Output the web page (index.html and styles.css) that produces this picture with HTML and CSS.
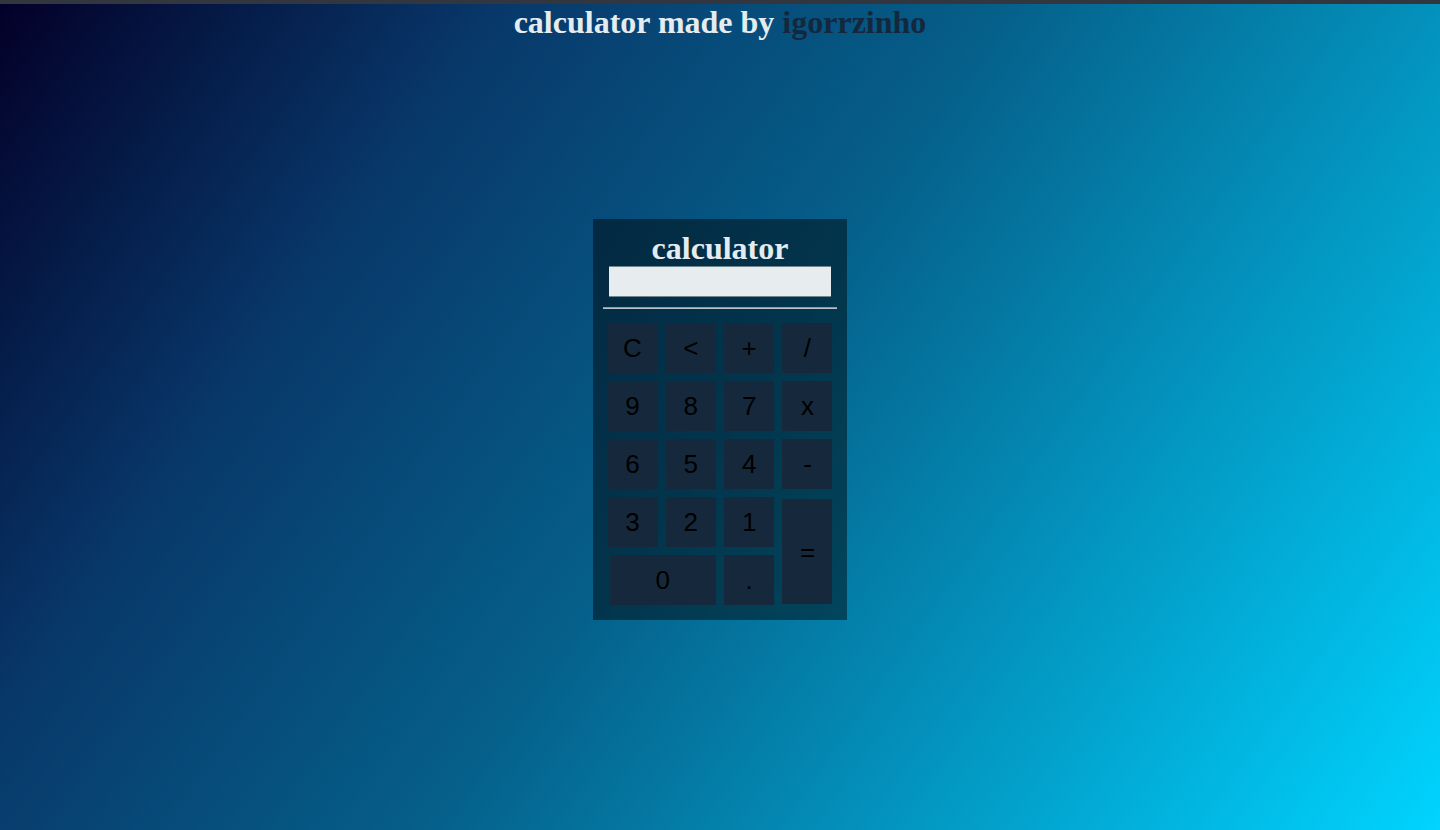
FILE: index.html
```html
<!DOCTYPE html>
<html lang="en">
<head>
<meta charset="utf-8">
<title>calculator</title>
<link rel="stylesheet" href="styles.css">
</head>
<body>
<div class="topbar"></div>
<h1 class="heading">calculator made by <span class="author">igorrzinho</span></h1>
<main class="calc">
  <h2 class="calc-title">calculator</h2>
  <input class="display" type="text">
  <hr class="divider">
  <div class="keys">
    <button class="key">C</button>
    <button class="key">&lt;</button>
    <button class="key">+</button>
    <button class="key">/</button>
    <button class="key">9</button>
    <button class="key">8</button>
    <button class="key">7</button>
    <button class="key">x</button>
    <button class="key">6</button>
    <button class="key">5</button>
    <button class="key">4</button>
    <button class="key">-</button>
    <button class="key">3</button>
    <button class="key">2</button>
    <button class="key">1</button>
    <button class="key key-eq">=</button>
    <button class="key key-zero">0</button>
    <button class="key">.</button>
  </div>
</main>
</body>
</html>
```

FILE: styles.css
```css
html, body {
  margin: 0;
  padding: 0;
  height: 100%;
}
body {
  background: linear-gradient(125deg, #030028 0%, #08386a 25%, #05608a 50%, #00d4ff 100%);
  font-family: "Liberation Serif", serif;
  overflow: hidden;
}
.topbar {
  height: 4px;
  background: #31363f;
}
.heading {
  margin: 0;
  font-size: 32px;
  font-weight: bold;
  text-align: center;
  color: #e5ecef;
  line-height: 37px;
}
.author {
  color: #13283d;
}
.calc {
  width: 254px;
  box-sizing: border-box;
  margin: 178px auto 0;
  padding: 11px 10px 15px;
  background: rgba(0, 0, 0, 0.45);
  display: flex;
  flex-direction: column;
  align-items: center;
}
.calc-title {
  margin: 0;
  font-size: 32px;
  font-weight: bold;
  color: #e5ecef;
  line-height: 36px;
}
.display {
  display: block;
  width: 222px;
  height: 31px;
  box-sizing: border-box;
  margin: 0;
  border: none;
  border-top: 1px solid #71858f;
  border-bottom: 1px solid #71858f;
  background: #e7ecef;
  padding: 0 4px;
}
.divider {
  width: 100%;
  box-sizing: border-box;
  margin: 10px 0 14px;
  border: none;
  border-top: 1px solid #8d9ca4;
  border-bottom: 1px solid #b8c2c7;
  height: 0;
}
.keys {
  display: grid;
  grid-template-columns: repeat(4, 50px);
  grid-auto-rows: 50px;
  column-gap: 8.33px;
  row-gap: 8px;
}
.key {
  border: none;
  margin: 0;
  padding: 0;
  background: #16283b;
  color: #000;
  font-family: "Liberation Sans", Arial, sans-serif;
  font-size: 26px;
  line-height: 50px;
}
.key-zero {
  grid-column: 1 / span 2;
  margin-left: 2px;
}
.key-eq {
  grid-column: 4;
  grid-row: 4 / span 2;
  margin-top: 2px;
  margin-bottom: 1px;
}
```
